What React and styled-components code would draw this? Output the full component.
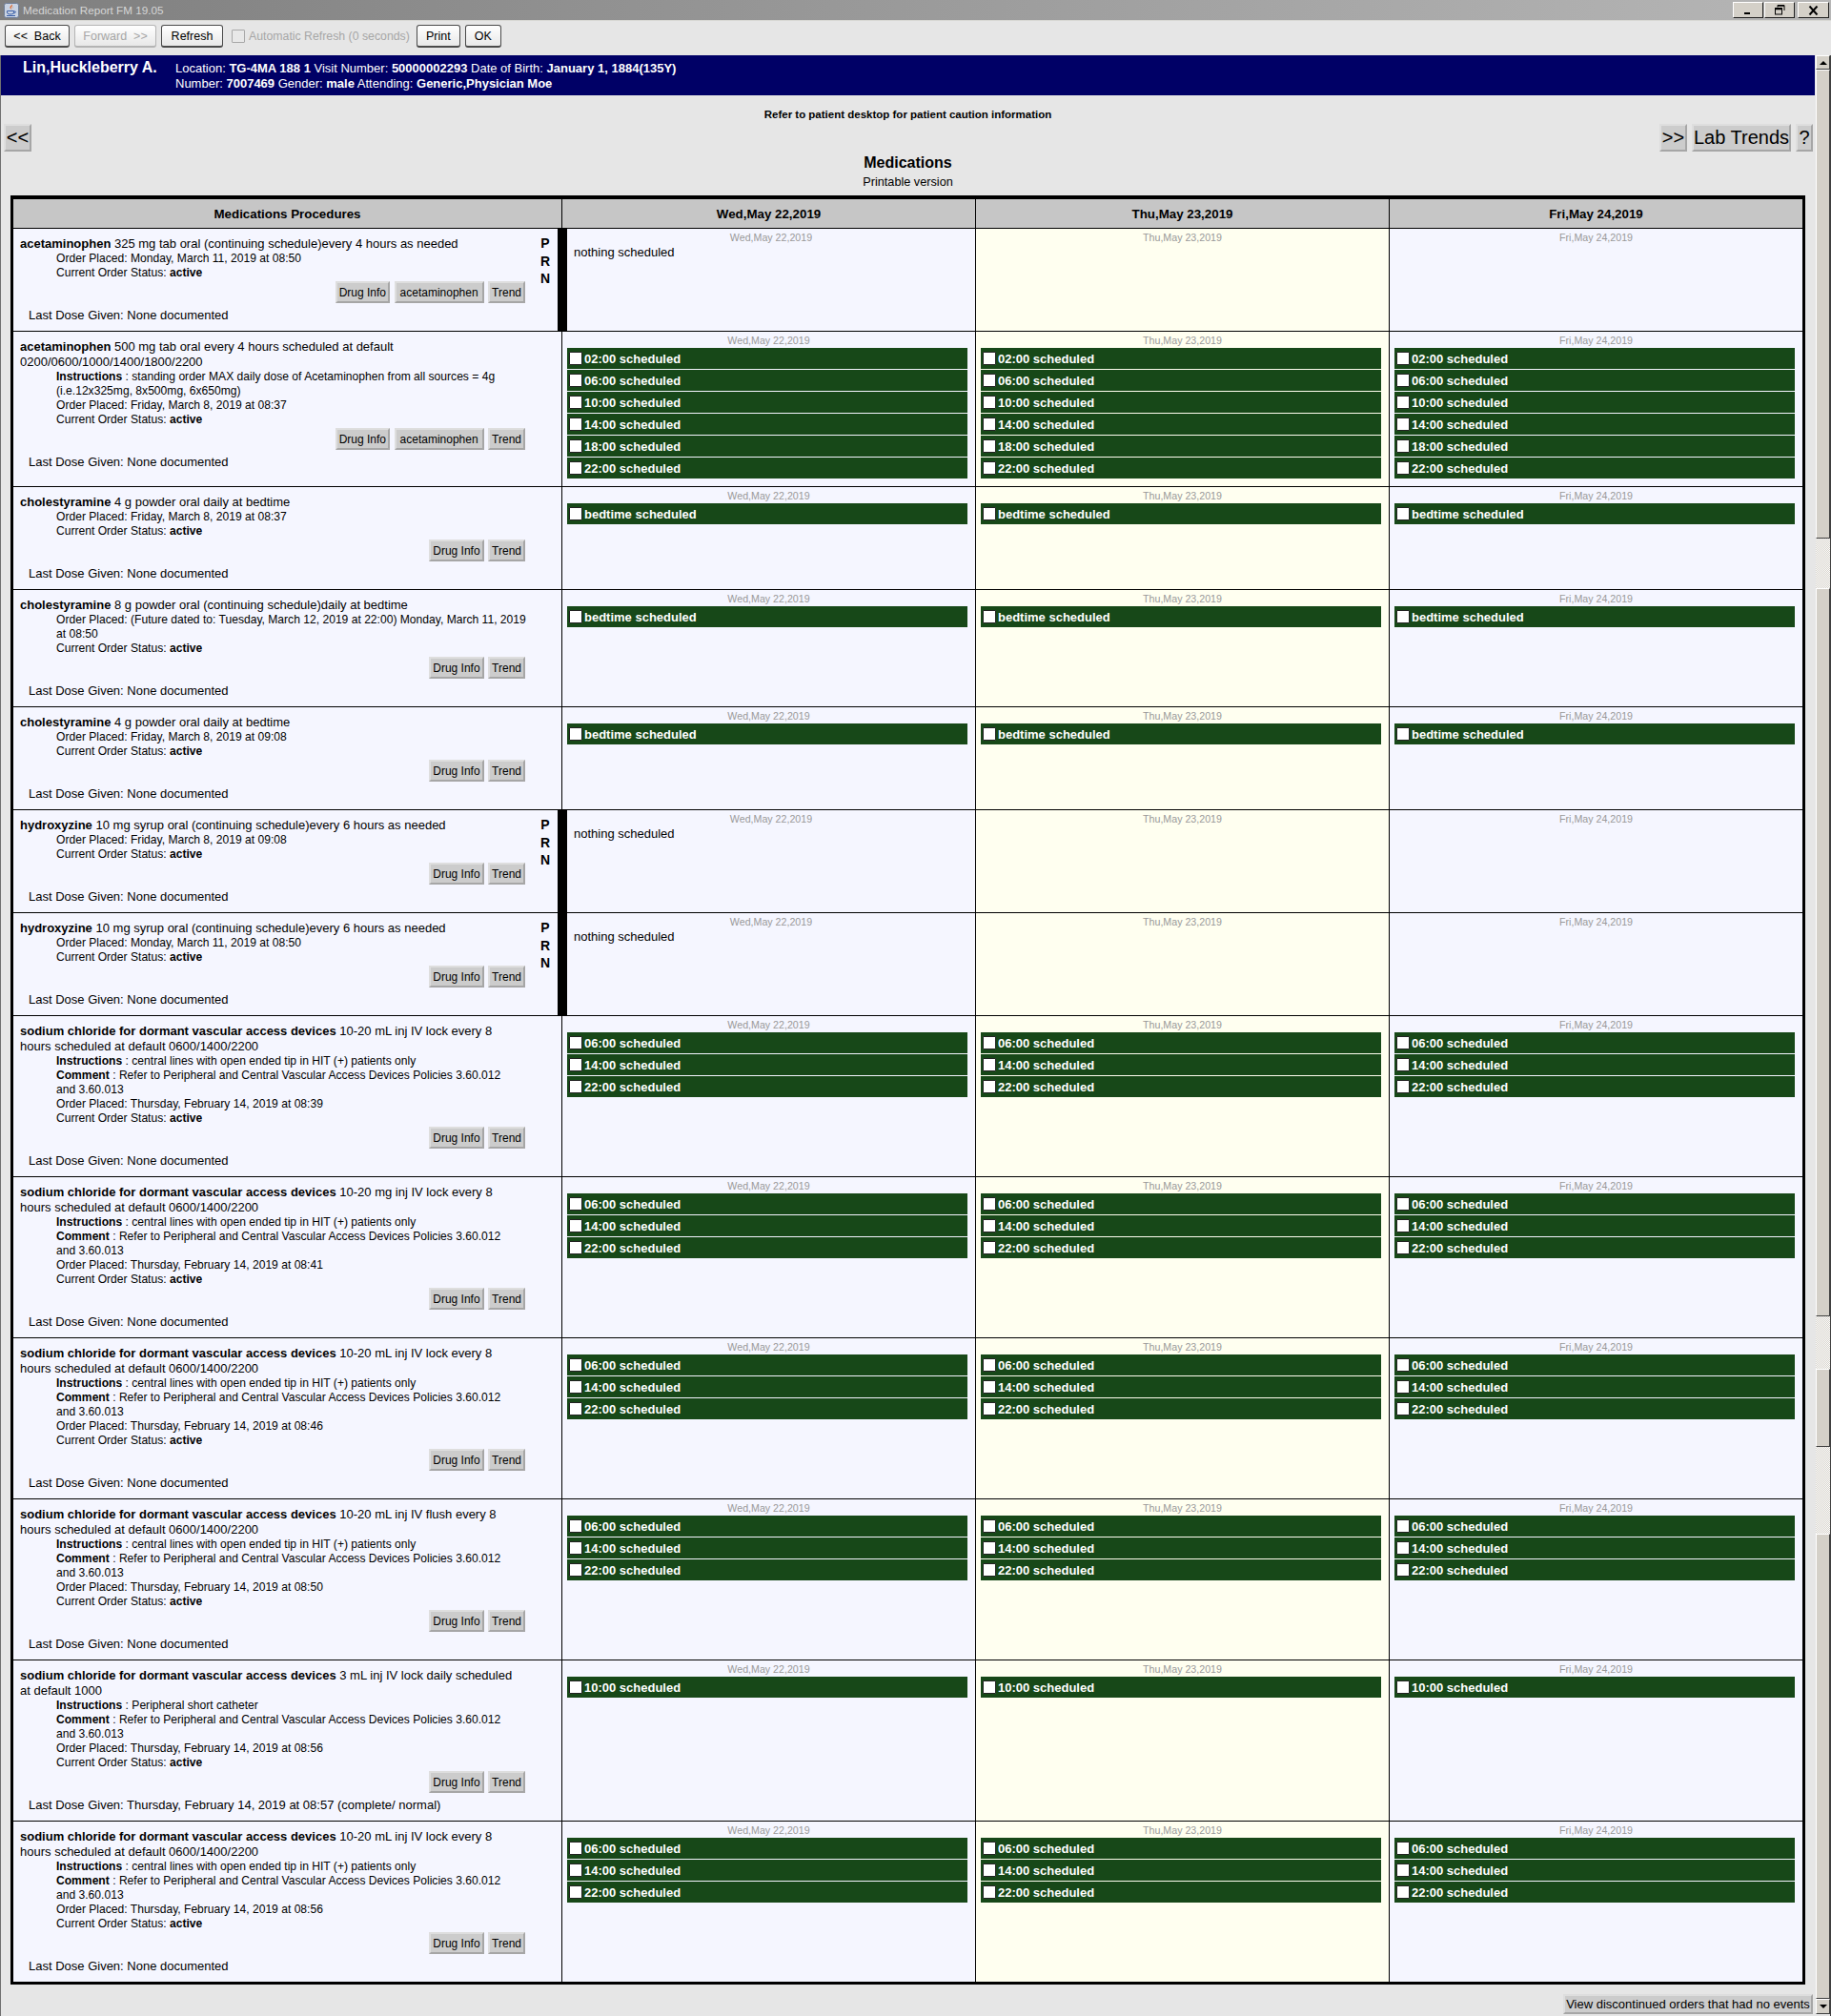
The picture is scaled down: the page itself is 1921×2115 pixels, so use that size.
import React from "react";
import styled, { createGlobalStyle } from "styled-components";

const GlobalStyle = createGlobalStyle`
  html, body {
    margin: 0;
    padding: 0;
    background: #e6e6e6;
  }
  body {
    font-family: "Liberation Sans", Arial, sans-serif;
    color: #000;
    overflow: hidden;
  }
  * {
    box-sizing: border-box;
  }
`;

const Window = styled.div`
  display: flex;
  flex-direction: column;
  width: 1921px;
  height: 2115px;
  overflow: hidden;
`;

const TitleBar = styled.div`
  display: flex;
  align-items: center;
  flex: none;
  height: 22px;
  padding: 2px 2px 2px 4px;
  font-size: 11.7px;
  color: #d6d6d6;
  background: linear-gradient(90deg, #7f7f7f, #b6b6b6);
  border-bottom: 1px solid #d8d8d4;
`;

const TitleText = styled.span`
  flex: 1;
  margin-left: 4px;
`;

const WindowButton = styled.div`
  display: flex;
  align-items: center;
  justify-content: center;
  width: ${(p) => p.$w}px;
  height: 17px;
  margin-left: ${(p) => p.$gap}px;
  background: #d4d0c8;
  border: 1px solid;
  border-color: #fff #222 #222 #fff;
`;

const Toolbar = styled.div`
  display: flex;
  align-items: flex-start;
  flex: none;
  height: 36px;
  padding: 4px 0 0 5px;
  gap: 5px;
  background: #e6e6e6;
`;

const ToolButton = styled.button`
  width: ${(p) => p.$w}px;
  height: 24px;
  padding: 0;
  font-family: inherit;
  font-size: 12.5px;
  color: ${(p) => (p.disabled ? "#a6a6a6" : "#000")};
  background: linear-gradient(#ffffff, #e8e8e8);
  border: 1px solid ${(p) => (p.disabled ? "#b4b4b4" : "#4a4a4a")};
  border-bottom-width: 2px;
  border-radius: 3px;
`;

const AutoRefresh = styled.label`
  display: flex;
  align-items: center;
  height: 24px;
  margin: 0 2px 0 4px;
  gap: 4px;
  font-size: 12.3px;
  color: #a6a6a6;
`;

const AutoBox = styled.span`
  width: 14px;
  height: 14px;
  background: #e8e8e8;
  border: 1px solid #a8a8a8;
  border-radius: 1px;
`;

const Body = styled.div`
  display: flex;
  flex: 1;
  min-height: 0;
`;

const Content = styled.main`
  display: flex;
  flex-direction: column;
  width: 1904px;
  border-left: 1px solid #707070;
`;

const Banner = styled.header`
  display: flex;
  flex: none;
  height: 42px;
  padding-left: 23px;
  color: #fff;
  background: #000066;
`;

const PatientName = styled.div`
  width: 160px;
  margin-top: 3px;
  font-size: 16px;
  line-height: 20px;
  font-weight: bold;
`;

const PatientInfo = styled.div`
  width: 560px;
  padding-top: 6px;
  font-size: 13px;
  line-height: 16px;
  b {
    font-weight: bold;
  }
`;

const Caution = styled.div`
  margin-top: 13px;
  font-size: 11.5px;
  line-height: 14px;
  font-weight: bold;
  text-align: center;
`;

const NavRow = styled.nav`
  display: flex;
  justify-content: space-between;
  margin-top: 3px;
  padding: 0 2px 0 3px;
`;

const NavGroup = styled.div`
  display: flex;
  gap: 5px;
`;

const GrayButton = styled.button`
  padding: 0 ${(p) => (p.$pad !== undefined ? p.$pad : 6)}px;
  font-family: inherit;
  color: #000;
  white-space: nowrap;
  background: #cccccc;
  border: 2px solid;
  border-color: #dedede #a6a6a6 #a6a6a6 #dedede;
`;

const NavButton = styled(GrayButton)`
  width: ${(p) => p.$w}px;
  height: 29px;
  padding: 0;
  font-size: 20px;
`;

const PageTitle = styled.h1`
  margin: 3px 0 0;
  font-size: 16px;
  line-height: 18px;
  font-weight: bold;
  text-align: center;
`;

const PageSubtitle = styled.div`
  margin-top: 4px;
  font-size: 12.7px;
  line-height: 14px;
  text-align: center;
`;

const Schedule = styled.section`
  flex: none;
  width: 1883px;
  margin: 7px 0 0 10px;
  border: 3px solid #000;
  border-top-width: 4px;
`;

const Row = styled.div`
  display: grid;
  grid-template-columns: 576px 434px 434px 433px;
`;

const HeaderCell = styled.div`
  height: 31px;
  font-size: 13.33px;
  line-height: 31px;
  font-weight: bold;
  text-align: center;
  background: #c6c6c6;
  border-bottom: 1px solid #000;
  border-right: ${(p) => (p.$last ? "none" : "1px solid #000")};
`;

const OrderCell = styled.div`
  display: flex;
  background: #f5f6ff;
  border-bottom: ${(p) => (p.$last ? "none" : "1px solid #000")};
  border-right: ${(p) => (p.$prn ? "5px solid #000" : "1px solid #000")};
`;

const OrderMain = styled.div`
  width: 539px;
  flex: none;
  padding: 8px 0 9px 7px;
`;

const OrderTitle = styled.div`
  width: 525px;
  font-size: 13px;
  line-height: 16px;
  b {
    font-weight: bold;
  }
`;

const OrderDetail = styled.div`
  width: 494px;
  margin-left: 38px;
  font-size: 12.1px;
  line-height: 15px;
  white-space: pre-line;
  b {
    font-weight: bold;
  }
`;

const OrderButtons = styled.div`
  display: flex;
  justify-content: flex-end;
  gap: 4.5px;
  margin-top: 1px;
  width: 530px;
`;

const SmallButton = styled(GrayButton)`
  height: 23px;
  font-size: 12px;
`;

const LastDose = styled.div`
  margin: 5px 0 0 9px;
  font-size: 13px;
  line-height: 15px;
`;

const PrnMark = styled.div`
  flex: none;
  width: 30px;
  padding: 6px 0 0 8px;
  font-size: 14px;
  line-height: 18.5px;
  font-weight: bold;
  text-align: center;
`;

const DayCell = styled.div`
  padding: 0 8px 8px 5px;
  background: ${(p) => (p.$today ? "#fffff0" : "#f5f6ff")};
  border-bottom: ${(p) => (p.$last ? "none" : "1px solid #000")};
  border-right: ${(p) => (p.$end ? "none" : "1px solid #000")};
  border-left: ${(p) => (p.$prn ? "5px solid #000" : "none")};
`;

const DayLabel = styled.div`
  height: 17px;
  padding-left: 3px;
  font-size: 10.67px;
  line-height: 18px;
  color: #999999;
  text-align: center;
`;

const NothingText = styled.div`
  margin: 0 0 0 2px;
  font-size: 13px;
  line-height: 15px;
`;

const DoseList = styled.div`
  display: flex;
  flex-direction: column;
  gap: 1px;
`;

const DoseBar = styled.label`
  display: flex;
  align-items: center;
  height: 22px;
  padding-left: 2px;
  gap: 2px;
  font-size: 13px;
  font-weight: bold;
  color: #fff;
  background: #174818;
`;

const DoseCheck = styled.input.attrs({ type: "checkbox" })`
  appearance: none;
  flex: none;
  width: 14px;
  height: 14px;
  margin: 0;
  background: #fff;
  border: 1px solid #222;
  border-radius: 1px;
`;

const Footer = styled.div`
  display: flex;
  justify-content: flex-end;
  margin-top: 10px;
  padding-right: 2px;
`;

const FooterButton = styled(GrayButton)`
  width: 262px;
  height: 21px;
  padding: 0;
  font-size: 13px;
`;

const ScrollBar = styled.aside`
  display: flex;
  flex-direction: column;
  width: 17px;
  margin-left: 0;
  padding-left: 1px;
  border-right: 1px solid #404040;
`;

const ScrollArrow = styled.div`
  display: flex;
  align-items: center;
  justify-content: center;
  flex: none;
  height: ${(p) => p.$h}px;
  background: #d4d0c8;
  border: 1px solid;
  border-color: #fff #404040 #404040 #fff;
`;

const ScrollThumb = styled.div`
  flex: none;
  height: ${(p) => p.$h}px;
  background: #d4d0c8;
  border: 1px solid;
  border-color: #fff #404040 #404040 #fff;
`;

const ScrollTrack = styled.div`
  flex: none;
  height: ${(p) => p.$h}px;
  background: repeating-conic-gradient(#d4d0c8 0 25%, #ffffff 0 50%) 0 0 / 2px 2px;
`;

const ALL_DAY = ["bedtime"];
const SIX = ["02:00", "06:00", "10:00", "14:00", "18:00", "22:00"];
const THREE = ["06:00", "14:00", "22:00"];

const NACL = "sodium chloride for dormant vascular access devices";
const LINES_NOTE = "central lines with open ended tip in HIT (+) patients only";
const POLICY = "Refer to Peripheral and Central Vascular Access Devices Policies 3.60.012\nand 3.60.013";

const orders = [
  {
    name: "acetaminophen",
    text: "325 mg tab oral (continuing schedule)every 4 hours as needed",
    placed: "Monday, March 11, 2019 at 08:50",
    prn: true,
    extra: "acetaminophen",
  },
  {
    name: "acetaminophen",
    text: "500 mg tab oral every 4 hours scheduled at default 0200/0600/1000/1400/1800/2200",
    instructions: "standing order MAX daily dose of Acetaminophen from all sources = 4g\n(i.e.12x325mg, 8x500mg, 6x650mg)",
    placed: "Friday, March 8, 2019 at 08:37",
    doses: SIX,
    extra: "acetaminophen",
  },
  {
    name: "cholestyramine",
    text: "4 g powder oral daily at bedtime",
    placed: "Friday, March 8, 2019 at 08:37",
    doses: ALL_DAY,
  },
  {
    name: "cholestyramine",
    text: "8 g powder oral (continuing schedule)daily at bedtime",
    placed: "(Future dated to: Tuesday, March 12, 2019 at 22:00) Monday, March 11, 2019\nat 08:50",
    doses: ALL_DAY,
  },
  {
    name: "cholestyramine",
    text: "4 g powder oral daily at bedtime",
    placed: "Friday, March 8, 2019 at 09:08",
    doses: ALL_DAY,
  },
  {
    name: "hydroxyzine",
    text: "10 mg syrup oral (continuing schedule)every 6 hours as needed",
    placed: "Friday, March 8, 2019 at 09:08",
    prn: true,
  },
  {
    name: "hydroxyzine",
    text: "10 mg syrup oral (continuing schedule)every 6 hours as needed",
    placed: "Monday, March 11, 2019 at 08:50",
    prn: true,
  },
  {
    name: NACL,
    text: "10-20 mL inj IV lock every 8 hours scheduled at default 0600/1400/2200",
    instructions: LINES_NOTE,
    comment: POLICY,
    placed: "Thursday, February 14, 2019 at 08:39",
    doses: THREE,
  },
  {
    name: NACL,
    text: "10-20 mg inj IV lock every 8 hours scheduled at default 0600/1400/2200",
    instructions: LINES_NOTE,
    comment: POLICY,
    placed: "Thursday, February 14, 2019 at 08:41",
    doses: THREE,
  },
  {
    name: NACL,
    text: "10-20 mL inj IV lock every 8 hours scheduled at default 0600/1400/2200",
    instructions: LINES_NOTE,
    comment: POLICY,
    placed: "Thursday, February 14, 2019 at 08:46",
    doses: THREE,
  },
  {
    name: NACL,
    text: "10-20 mL inj IV flush every 8 hours scheduled at default 0600/1400/2200",
    instructions: LINES_NOTE,
    comment: POLICY,
    placed: "Thursday, February 14, 2019 at 08:50",
    doses: THREE,
  },
  {
    name: NACL,
    text: "3 mL inj IV lock daily scheduled at default 1000",
    instructions: "Peripheral short catheter",
    comment: POLICY,
    placed: "Thursday, February 14, 2019 at 08:56",
    doses: ["10:00"],
    lastDose: "Thursday, February 14, 2019 at 08:57 (complete/ normal)",
  },
  {
    name: NACL,
    text: "10-20 mL inj IV lock every 8 hours scheduled at default 0600/1400/2200",
    instructions: LINES_NOTE,
    comment: POLICY,
    placed: "Thursday, February 14, 2019 at 08:56",
    doses: THREE,
  },
];

const days = ["Wed,May 22,2019", "Thu,May 23,2019", "Fri,May 24,2019"];

const JavaIcon = () => (
  <svg width="16" height="16" viewBox="0 0 16 16">
    <rect x="0.5" y="0.5" width="15" height="15" rx="2" fill="#c9d3e3" stroke="#6f7f99" />
    <path d="M8.500 1.500c1.500 2-2 3-.5 5 .3.4.6.7.8 1-1.800-1-3.200-2.400-1.800-3.900.6-.7 1.400-1.200 1.500-2.100z" fill="#e2601a" />
    <path d="M10.500 3.500c-1.200.8-1.900 1.500-1.300 2.500-.1-1.100.6-1.700 1.300-2.500z" fill="#e2601a" />
    <path d="M3.500 8.500h7c.6 2.300-.8 3.500-3.500 3.500s-4.100-1.200-3.500-3.500zM10.500 9h1.300c1 0 1 1.800-1.500 2" fill="none" stroke="#3a5fa8" strokeWidth="1" />
    <path d="M3 13.500h9" stroke="#3a5fa8" strokeWidth="1" />
  </svg>
);

const MinimizeIcon = () => (
  <svg width="10" height="10" viewBox="0 0 10 10">
    <rect x="1" y="7" width="6" height="2" fill="#000" />
  </svg>
);

const RestoreIcon = () => (
  <svg width="11" height="11" viewBox="0 0 11 11">
    <path d="M3 .5h7v5.500M3 .5v2" fill="none" stroke="#000" />
    <path d="M3 1h7" stroke="#000" strokeWidth="1.500" />
    <rect x="0.500" y="3.500" width="7" height="6.500" fill="#d4d0c8" stroke="#000" />
    <path d="M0 4.500h8" stroke="#000" strokeWidth="1.500" />
  </svg>
);

const CloseIcon = () => (
  <svg width="11" height="10" viewBox="0 0 11 10">
    <path d="M1.500 .5l8 9M9.500 .5l-8 9" stroke="#000" strokeWidth="2" />
  </svg>
);

const Triangle = ({ down }) => (
  <svg width="8" height="4" viewBox="0 0 8 4">
    <path d={down ? "M0 0h8L4 4z" : "M0 4h8L4 0z"} fill="#000" />
  </svg>
);

const OrderRow = ({ order, last }) => {
  const { name, text, instructions, comment, placed, prn, extra, doses, lastDose } = order;
  return (
    <Row>
      <OrderCell $prn={prn} $last={last}>
        <OrderMain>
          <OrderTitle>
            <b>{name}</b> {text}
          </OrderTitle>
          {instructions && (
            <OrderDetail>
              <b>Instructions</b> : {instructions}
            </OrderDetail>
          )}
          {comment && (
            <OrderDetail>
              <b>Comment</b> : {comment}
            </OrderDetail>
          )}
          <OrderDetail>Order Placed: {placed}</OrderDetail>
          <OrderDetail>
            Current Order Status: <b>active</b>
          </OrderDetail>
          <OrderButtons>
            <SmallButton $pad={2}>Drug Info</SmallButton>
            {extra && <SmallButton $pad={4}>{extra}</SmallButton>}
            <SmallButton $pad={2}>Trend</SmallButton>
          </OrderButtons>
          <LastDose>Last Dose Given: {lastDose || "None documented"}</LastDose>
        </OrderMain>
        {prn && (
          <PrnMark>
            P
            <br />
            R
            <br />N
          </PrnMark>
        )}
      </OrderCell>
      {days.map((day, i) => (
        <DayCell key={day} $today={i === 1} $end={i === 2} $prn={prn && i === 0} $last={last}>
          <DayLabel>{day}</DayLabel>
          {prn && i === 0 && <NothingText>nothing scheduled</NothingText>}
          {doses && (
            <DoseList>
              {doses.map((dose) => (
                <DoseBar key={dose}>
                  <DoseCheck readOnly />
                  {dose} scheduled
                </DoseBar>
              ))}
            </DoseList>
          )}
        </DayCell>
      ))}
    </Row>
  );
};

const App = () => (
  <Window>
    <GlobalStyle />
    <TitleBar>
      <JavaIcon />
      <TitleText>Medication Report FM 19.05</TitleText>
      <WindowButton $w={32} $gap={0}>
        <MinimizeIcon />
      </WindowButton>
      <WindowButton $w={32} $gap={1}>
        <RestoreIcon />
      </WindowButton>
      <WindowButton $w={33} $gap={3}>
        <CloseIcon />
      </WindowButton>
    </TitleBar>
    <Toolbar>
      <ToolButton $w={68}>&lt;&lt;&nbsp; Back</ToolButton>
      <ToolButton $w={86} disabled>
        Forward &nbsp;&gt;&gt;
      </ToolButton>
      <ToolButton $w={65}>Refresh</ToolButton>
      <AutoRefresh>
        <AutoBox />
        Automatic Refresh (0 seconds)
      </AutoRefresh>
      <ToolButton $w={46}>Print</ToolButton>
      <ToolButton $w={38}>OK</ToolButton>
    </Toolbar>
    <Body>
      <Content>
        <Banner>
          <PatientName>Lin,Huckleberry A.</PatientName>
          <PatientInfo>
            Location: <b>TG-4MA 188 1</b> Visit Number: <b>50000002293</b> Date of Birth:{" "}
            <b>January 1, 1884(135Y)</b> Number: <b>7007469</b> Gender: <b>male</b> Attending:{" "}
            <b>Generic,Physician Moe</b>
          </PatientInfo>
        </Banner>
        <Caution>Refer to patient desktop for patient caution information</Caution>
        <NavRow>
          <NavButton $w={29}>&lt;&lt;</NavButton>
          <NavGroup>
            <NavButton $w={29}>&gt;&gt;</NavButton>
            <NavButton $w={104}>Lab Trends</NavButton>
            <NavButton $w={18}>?</NavButton>
          </NavGroup>
        </NavRow>
        <PageTitle>Medications</PageTitle>
        <PageSubtitle>Printable version</PageSubtitle>
        <Schedule>
          <Row>
            <HeaderCell>Medications Procedures</HeaderCell>
            {days.map((day, i) => (
              <HeaderCell key={day} $last={i === 2}>
                {day}
              </HeaderCell>
            ))}
          </Row>
          {orders.map((order, i) => (
            <OrderRow key={i} order={order} last={i === orders.length - 1} />
          ))}
        </Schedule>
        <Footer>
          <FooterButton>View discontinued orders that had no events</FooterButton>
        </Footer>
      </Content>
      <ScrollBar>
        <ScrollArrow $h={15}>
          <Triangle />
        </ScrollArrow>
        <ScrollThumb $h={492} />
        <ScrollTrack $h={52} />
        <ScrollThumb $h={764} />
        <ScrollTrack $h={55} />
        <ScrollThumb $h={82} />
        <ScrollTrack $h={91} />
        <ScrollThumb $h={488} />
        <ScrollArrow $h={16}>
          <Triangle down />
        </ScrollArrow>
      </ScrollBar>
    </Body>
  </Window>
);

export default App;
